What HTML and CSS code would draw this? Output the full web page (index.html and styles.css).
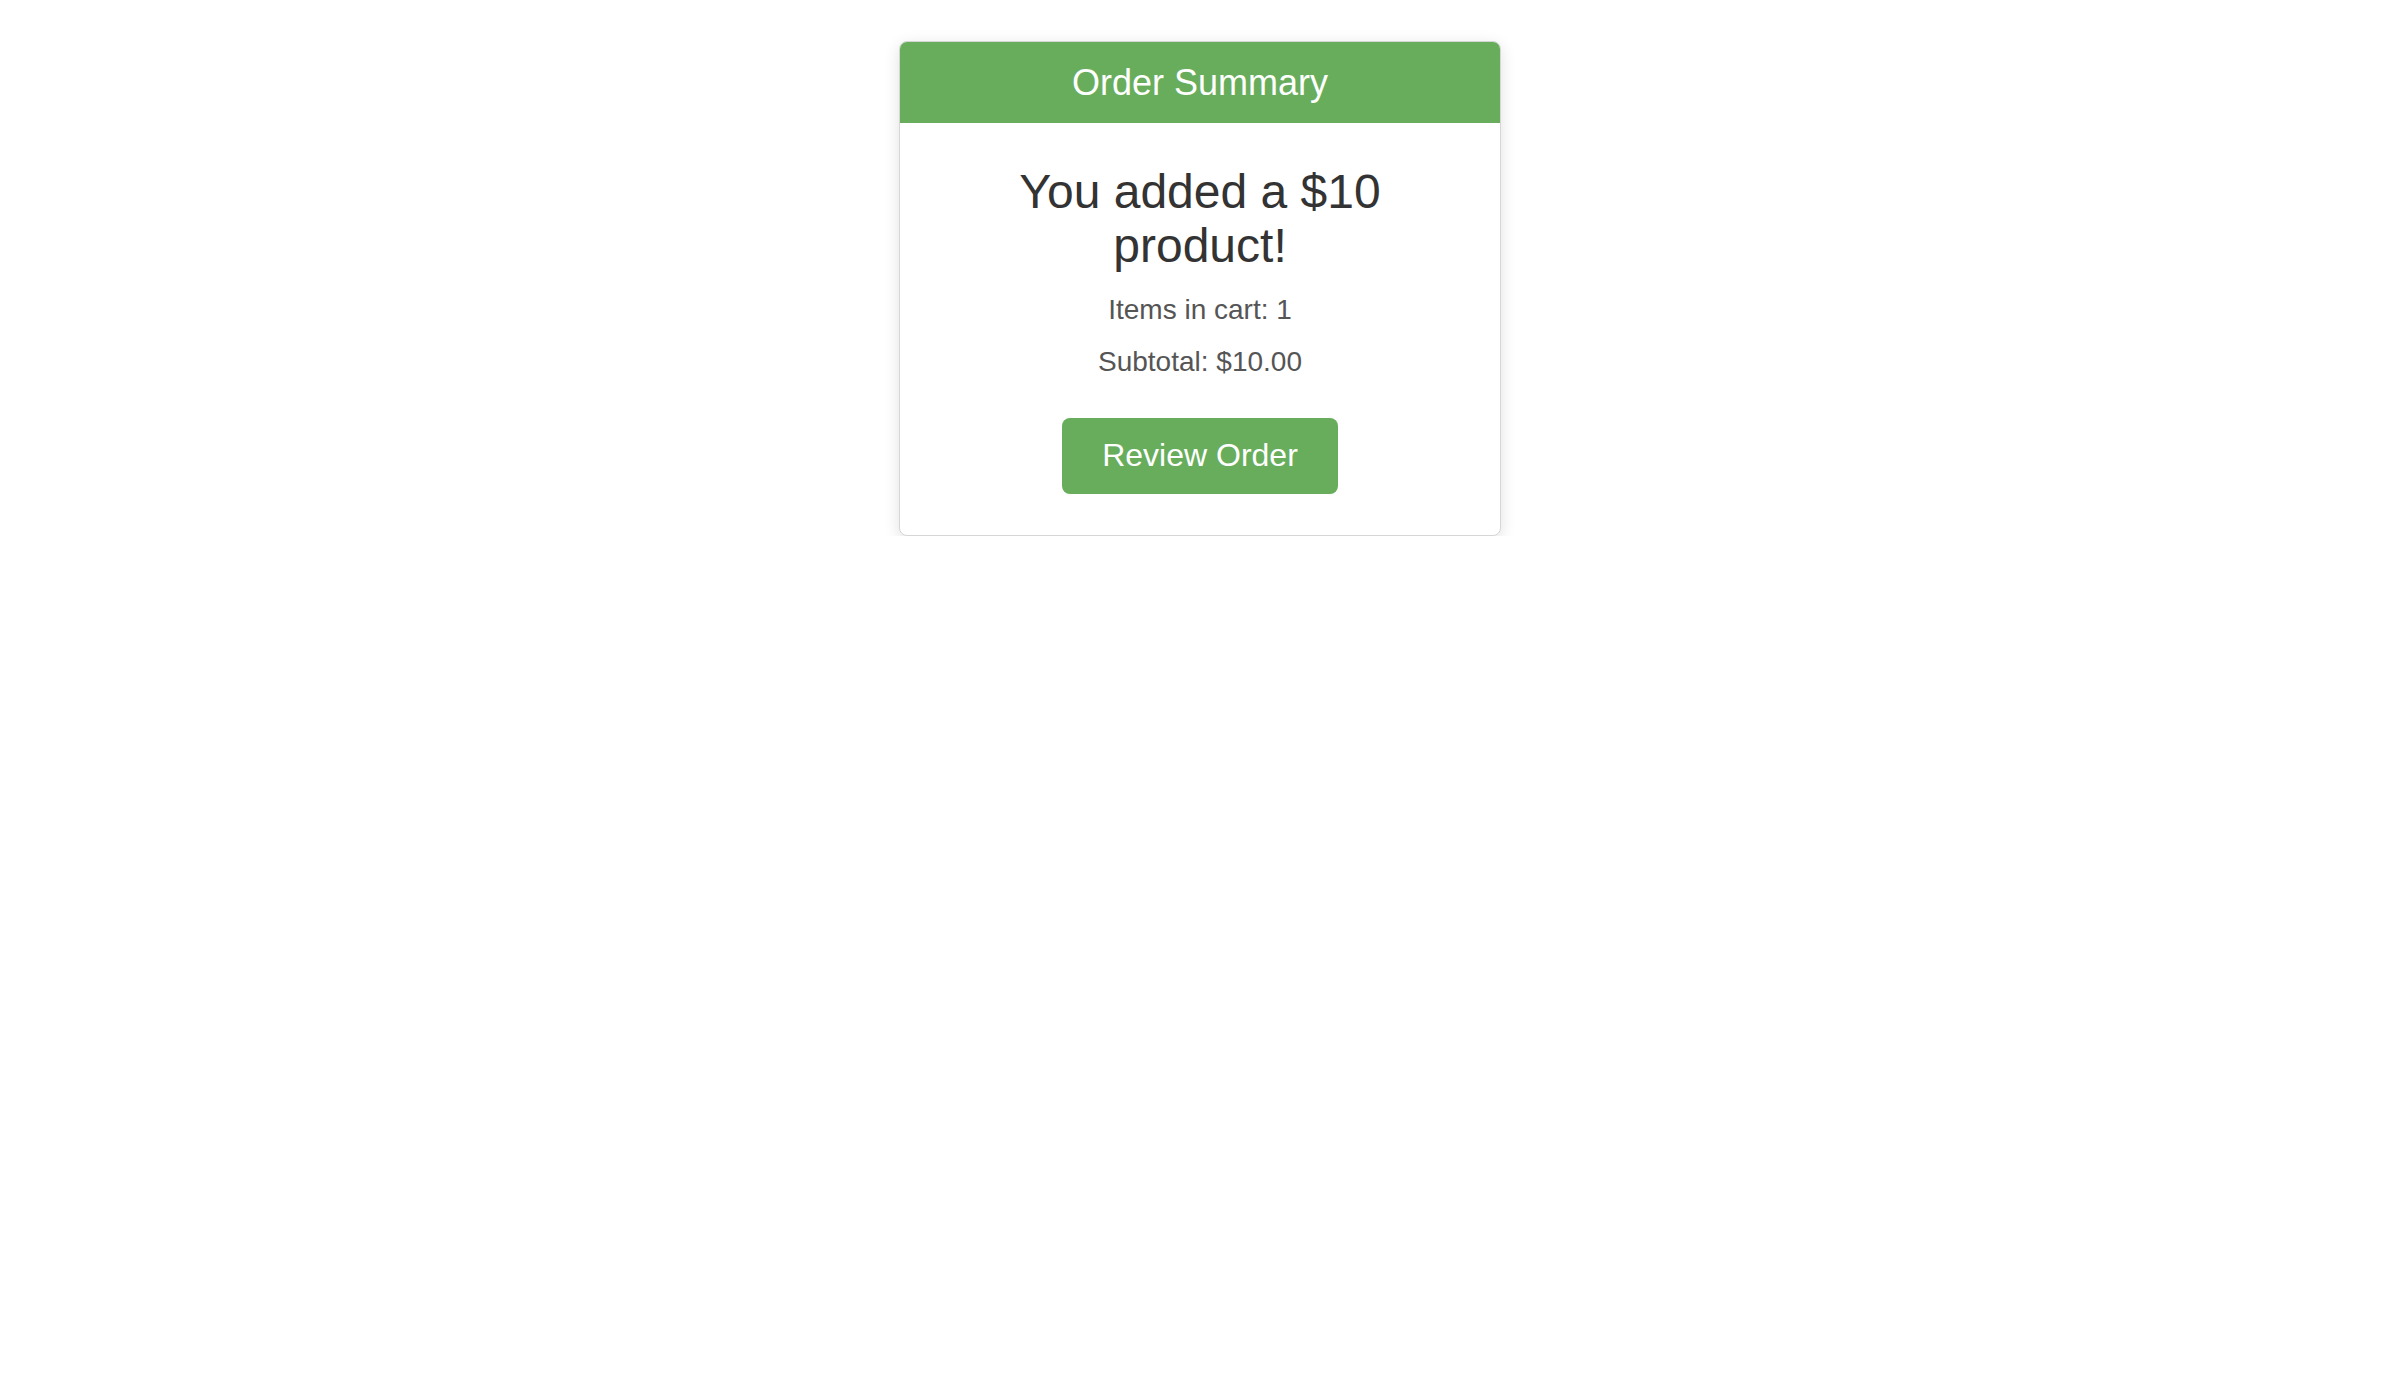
FILE: index.html
```html
<!DOCTYPE html>
<html lang="en">
<head>
<meta charset="utf-8">
<title>Order Summary</title>
<link rel="stylesheet" href="styles.css">
</head>
<body>
<div class="card">
  <div class="card-header">Order Summary</div>
  <div class="card-body">
    <h1 class="title">You added a $10 product!</h1>
    <p class="line">Items in cart: 1</p>
    <p class="line">Subtotal: $10.00</p>
    <div class="actions"><button class="btn">Review Order</button></div>
  </div>
</div>
</body>
</html>
```
FILE: styles.css
```css
html, body {
  margin: 0;
  padding: 0;
  background: #ffffff;
}
body {
  font-family: "Liberation Sans", Arial, Helvetica, sans-serif;
  padding-top: 41px;
}
.card {
  width: 600px;
  margin: 0 auto;
  border: 1px solid #d6d6d6;
  border-radius: 8px;
  overflow: hidden;
  background: #fff;
  box-shadow: 0 4px 16px rgba(0, 0, 0, 0.12);
}
.card-header {
  background: #67ad5c;
  color: #fff;
  text-align: center;
  font-size: 36px;
  line-height: 41px;
  padding: 20px 0;
}
.card-body {
  text-align: center;
  padding: 42px 30px 41px;
}
.title {
  margin: 0 0 21px;
  font-size: 48px;
  line-height: 54px;
  font-weight: normal;
  color: #333;
}
.line {
  margin: 0 0 20px;
  font-size: 28px;
  line-height: 32px;
  color: #555;
}
.actions {
  margin-top: 40px;
}
.btn {
  display: inline-block;
  font-family: "Liberation Sans", Arial, Helvetica, sans-serif;
  background: #67ad5c;
  color: #fff;
  border: none;
  border-radius: 8px;
  font-size: 32px;
  line-height: 36px;
  padding: 19px 0 21px;
  width: 276px;
  cursor: pointer;
}
```
